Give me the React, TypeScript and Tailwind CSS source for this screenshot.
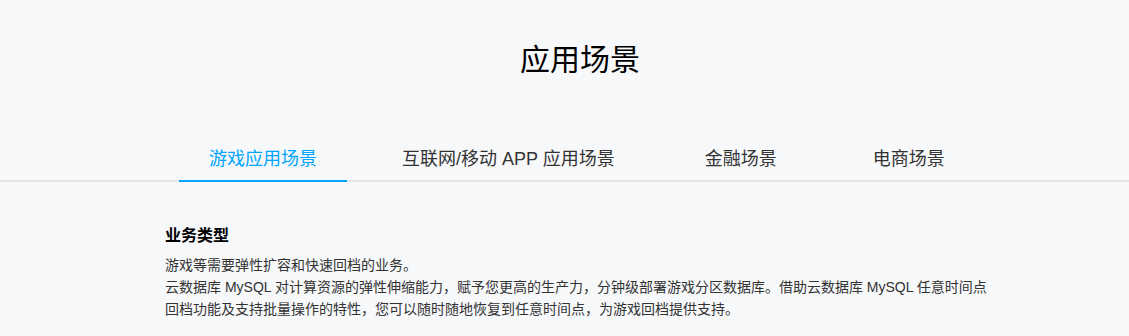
const tabs = [
  { label: '游戏应用场景', ml: 'ml-0' },
  { label: '互联网/移动 APP 应用场景', ml: 'ml-[25px]' },
  { label: '金融场景', ml: 'ml-[30px]' },
  { label: '电商场景', ml: 'ml-[36px]' },
];

export default function App() {
  const active = 0;
  return (
    <div
      className="min-h-[336px] w-full bg-[#f7f8fa] text-[#333]"
      style={{ fontFamily: '"Liberation Sans", "Noto Sans CJK SC", sans-serif' }}
    >
      <h1 className="pt-[40px] pl-[31px] text-center text-[30px] leading-[40px] font-normal text-black">应用场景</h1>

      <div className="mt-[58px] border-b-2 border-[#e3e4e6]">
        <div className="flex pl-[179px]">
          {tabs.map((t, i) => (
            <div
              key={t.label}
              className={
                t.ml +
                ' -mb-[2px] px-[30px] pt-[9px] pb-[9px] text-[18px] leading-[24px] whitespace-nowrap cursor-pointer border-b-2 ' +
                (i === active ? 'border-[#00a4ff] text-[#00a4ff]' : 'border-transparent text-[#333]')
              }
            >
              {t.label}
            </div>
          ))}
        </div>
      </div>

      <div className="pl-[165px] pt-[42px]">
        <h3 className="text-[16px] leading-[24px] font-bold text-black">业务类型</h3>
        <p className="mt-[6px] text-[14px] leading-[22px] whitespace-nowrap text-[#333]">
          游戏等需要弹性扩容和快速回档的业务。
          <br />
          云数据库 MySQL 对计算资源的弹性伸缩能力，赋予您更高的生产力，分钟级部署游戏分区数据库。借助云数据库 MySQL 任意时间点
          <br />
          回档功能及支持批量操作的特性，您可以随时随地恢复到任意时间点，为游戏回档提供支持。
        </p>
      </div>
    </div>
  );
}
